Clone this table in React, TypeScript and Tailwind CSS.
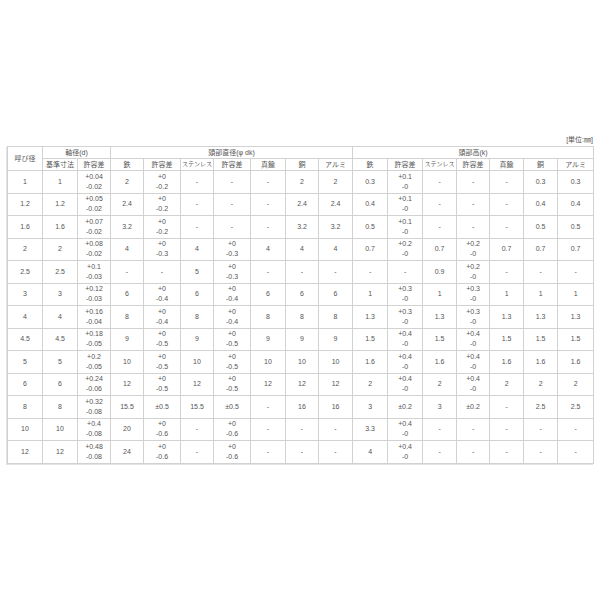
const colWidths = [
  "w-[35px]", "w-[35px]", "w-[33px]", "w-[33px]", "w-[37px]", "w-[33px]", "w-[37px]", "w-[35px]", "w-[33px]",
  "w-[34px]", "w-[35px]", "w-[35px]", "w-[34px]", "w-[33px]", "w-[34px]", "w-[34px]", "w-[36px]",
]

const subHeads = [
  "基準寸法", "許容差",
  "鉄", "許容差", "ステンレス", "許容差", "真鍮", "銅", "アルミ",
  "鉄", "許容差", "ステンレス", "許容差", "真鍮", "銅", "アルミ",
]

// "a|b" = two lines in one cell
const rows: string[][] = [
  ["1", "1", "+0.04|-0.02", "2", "+0|-0.2", "-", "-", "-", "2", "2", "0.3", "+0.1|-0", "-", "-", "-", "0.3", "0.3"],
  ["1.2", "1.2", "+0.05|-0.02", "2.4", "+0|-0.2", "-", "-", "-", "2.4", "2.4", "0.4", "+0.1|-0", "-", "-", "-", "0.4", "0.4"],
  ["1.6", "1.6", "+0.07|-0.02", "3.2", "+0|-0.2", "-", "-", "-", "3.2", "3.2", "0.5", "+0.1|-0", "-", "-", "-", "0.5", "0.5"],
  ["2", "2", "+0.08|-0.02", "4", "+0|-0.3", "4", "+0|-0.3", "4", "4", "4", "0.7", "+0.2|-0", "0.7", "+0.2|-0", "0.7", "0.7", "0.7"],
  ["2.5", "2.5", "+0.1|-0.03", "-", "-", "5", "+0|-0.3", "-", "-", "-", "-", "-", "0.9", "+0.2|-0", "-", "-", "-"],
  ["3", "3", "+0.12|-0.03", "6", "+0|-0.4", "6", "+0|-0.4", "6", "6", "6", "1", "+0.3|-0", "1", "+0.3|-0", "1", "1", "1"],
  ["4", "4", "+0.16|-0.04", "8", "+0|-0.4", "8", "+0|-0.4", "8", "8", "8", "1.3", "+0.3|-0", "1.3", "+0.3|-0", "1.3", "1.3", "1.3"],
  ["4.5", "4.5", "+0.18|-0.05", "9", "+0|-0.5", "9", "+0|-0.5", "9", "9", "9", "1.5", "+0.4|-0", "1.5", "+0.4|-0", "1.5", "1.5", "1.5"],
  ["5", "5", "+0.2|-0.05", "10", "+0|-0.5", "10", "+0|-0.5", "10", "10", "10", "1.6", "+0.4|-0", "1.6", "+0.4|-0", "1.6", "1.6", "1.6"],
  ["6", "6", "+0.24|-0.06", "12", "+0|-0.5", "12", "+0|-0.5", "12", "12", "12", "2", "+0.4|-0", "2", "+0.4|-0", "2", "2", "2"],
  ["8", "8", "+0.32|-0.08", "15.5", "±0.5", "15.5", "±0.5", "-", "16", "16", "3", "±0.2", "3", "±0.2", "-", "2.5", "2.5"],
  ["10", "10", "+0.4|-0.08", "20", "+0|-0.6", "-", "+0|-0.6", "-", "-", "-", "3.3", "+0.4|-0", "-", "-", "-", "-", "-"],
  ["12", "12", "+0.48|-0.08", "24", "+0|-0.6", "-", "+0|-0.6", "-", "-", "-", "4", "+0.4|-0", "-", "-", "-", "-", "-"],
]

const cell = "border border-[#d2d2d2] p-0 text-center align-middle font-normal"

export default function App() {
  return (
    <div
      className="min-h-[600px] w-[600px] bg-white pl-[7px] pt-[133px] text-[#555] [font-family:'Liberation_Sans','Noto_Sans_CJK_JP',sans-serif]"
    >
      <div className="h-[13px] w-[586px] text-right text-[7px] leading-[13px]">[単位:㎜]</div>
      <table className="w-[586px] table-fixed border-collapse border border-[#b8b8b8] text-[7px] shadow-[-1px_1px_0_#e2e2e2]">
        <colgroup>
          {colWidths.map((w, i) => (
            <col key={i} className={w} />
          ))}
        </colgroup>
        <thead>
          <tr className="h-[12px] leading-[11px]">
            <th rowSpan={2} className={cell}>呼び径</th>
            <th colSpan={2} className={cell}>軸径(d)</th>
            <th colSpan={7} className={cell}>頭部直径(φ dk)</th>
            <th colSpan={7} className={cell}>頭部高(k)</th>
          </tr>
          <tr className="h-[12px] leading-[11px]">
            {subHeads.map((h, i) => (
              <th
                key={i}
                className={`${cell} whitespace-nowrap ${h === "ステンレス" ? "text-[6px]" : ""}`}
              >
                {h}
              </th>
            ))}
          </tr>
        </thead>
        <tbody>
          {rows.map((r, ri) => (
            <tr key={ri} className="h-[22.5px] leading-[10px]">
              {r.map((v, ci) => (
                <td key={ci} className={cell}>
                  {v.includes("|") ? (
                    <>
                      {v.split("|")[0]}
                      <br />
                      {v.split("|")[1]}
                    </>
                  ) : (
                    v
                  )}
                </td>
              ))}
            </tr>
          ))}
        </tbody>
      </table>
    </div>
  )
}
